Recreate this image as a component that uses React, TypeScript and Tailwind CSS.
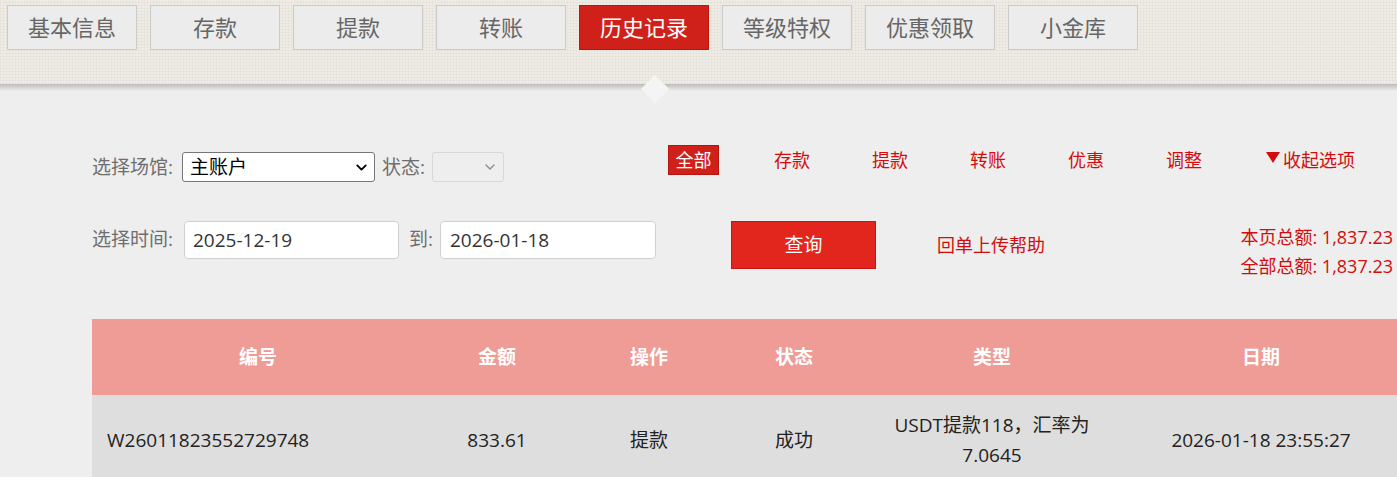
import { ChevronDown } from "lucide-react"

const tabs = ["基本信息", "存款", "提款", "转账", "历史记录", "等级特权", "优惠领取", "小金库"]

const filters = ["存款", "提款", "转账", "优惠", "调整"]

const columns = [
  { label: "编号", w: "w-[332px]" },
  { label: "金额", w: "w-[146px]" },
  { label: "操作", w: "w-[158px]" },
  { label: "状态", w: "w-[132px]" },
  { label: "类型", w: "w-[264px]" },
  { label: "日期", w: "w-[274px]" },
]

export default function App() {
  return (
    <div className="relative h-[477px] w-full overflow-hidden bg-[#eeeeee] font-['Open_Sans','Noto_Sans_CJK_SC',sans-serif]">
      {/* textured header with tabs */}
      <div className="h-[84px] bg-[#efece6] bg-[repeating-linear-gradient(90deg,rgba(120,110,90,0.05)_0px,rgba(120,110,90,0.05)_1px,transparent_1px,transparent_3px),repeating-linear-gradient(0deg,rgba(120,110,90,0.05)_0px,rgba(120,110,90,0.05)_1px,transparent_1px,transparent_3px)]">
        <div className="flex gap-[13px] pl-[7px] pt-[5px]">
          {tabs.map((t) => (
            <div
              key={t}
              className={
                t === "历史记录"
                  ? "flex h-[45px] w-[130px] items-center justify-center border border-[#c0150f] bg-[#d0201a] text-[22px] text-white"
                  : "flex h-[45px] w-[130px] items-center justify-center border border-[#cacaca] bg-[#ececec] text-[22px] text-[#666]"
              }
            >
              {t}
            </div>
          ))}
        </div>
      </div>
      <div className="h-[7px] bg-gradient-to-b from-[#bdbcba] to-[#eeeeee]" />

      {/* pointer under active tab */}
      <div className="absolute left-[645px] top-[79px] h-[20px] w-[20px] rotate-45 bg-[#f4f4f4]" />

      <div className="pl-[92px]">
        {/* row 1 */}
        <div className="mt-[54px] flex h-[37px]">
          <div className="flex w-[576px] items-end text-[19px] text-[#6e6e6e]">
            <span className="mb-[1px] w-[90px]">选择场馆:</span>
            <div className="relative flex h-[30px] w-[193px] items-center rounded-[3px] border border-[#767676] bg-white pl-[7px] text-[19px] text-black">
              主账户
              <ChevronDown className="absolute right-[4px] top-[6px] h-[17px] w-[17px] text-black" strokeWidth={2.6} />
            </div>
            <span className="mb-[1px] ml-[7px] w-[50px]">状态:</span>
            <div className="relative h-[30px] w-[72px] rounded-[3px] border border-[#d8d8d8] bg-[#eeeeee]">
              <ChevronDown className="absolute right-[5px] top-[6px] h-[16px] w-[16px] text-[#8a8a8a]" strokeWidth={2} />
            </div>
          </div>
          <div className="flex h-[30px] items-center text-[18px] text-[#d10d0d]">
            <span className="flex h-[30px] w-[51px] items-center justify-center border border-[#b5140f] bg-[#d0201a] text-white">
              全部
            </span>
            <div className="ml-[24px] flex">
              {filters.map((f) => (
                <span key={f} className="w-[98px] text-center">
                  {f}
                </span>
              ))}
            </div>
            <span className="ml-[32px] flex items-center">
              <svg width="16" height="12" viewBox="0 0 16 12" className="mr-[2px] mt-[-6px]">
                <path d="M1 1 H15 L8 12 Z" fill="#d10d0d" />
              </svg>
              收起选项
            </span>
          </div>
        </div>

        {/* row 2 */}
        <div className="mt-[39px] flex h-[48px] items-start">
          <div className="flex w-[639px] items-start text-[19px] text-[#6e6e6e]">
            <span className="mt-[4px] w-[92px]">选择时间:</span>
            <div className="flex h-[38px] w-[215px] items-center rounded-[4px] border border-[#cfcfcf] bg-white pl-[8px] text-[19px] text-[#333]">
              2025-12-19
            </div>
            <span className="ml-[10px] mt-[4px] w-[31px]">到:</span>
            <div className="flex h-[38px] w-[216px] items-center rounded-[4px] border border-[#cfcfcf] bg-white pl-[9px] text-[19px] text-[#333]">
              2026-01-18
            </div>
          </div>
          <button className="flex h-[48px] w-[145px] items-center justify-center border border-[#c8150e] bg-[#e2261d] text-[19px] text-white">
            查询
          </button>
          <span className="ml-[61px] mt-[11px] text-[18px] text-[#d10d0d]">回单上传帮助</span>
          <div className="ml-auto mr-[4px] mt-[2px] flex flex-col items-end text-[18px] leading-[29px] text-[#d10d0d]">
            <span>本页总额: 1,837.23</span>
            <span>全部总额: 1,837.23</span>
          </div>
        </div>

        {/* table */}
        <div className="mt-[50px] w-[1306px]">
          <div className="flex h-[76px] items-center bg-[#ef9b96] text-[19px] font-bold text-white">
            {columns.map((c) => (
              <div key={c.label} className={`${c.w} text-center`}>
                {c.label}
              </div>
            ))}
          </div>
          <div className="flex h-[90px] items-center bg-[#dedede] text-[19px] leading-[30px] text-[#222]">
            <div className="w-[332px] pl-[15px]">W26011823552729748</div>
            <div className="w-[146px] text-center">833.61</div>
            <div className="w-[158px] text-center">提款</div>
            <div className="w-[132px] text-center">成功</div>
            <div className="w-[264px] text-center">
              USDT提款118，汇率为
              <br />
              7.0645
            </div>
            <div className="w-[274px] text-center">2026-01-18 23:55:27</div>
          </div>
        </div>
      </div>
    </div>
  )
}
